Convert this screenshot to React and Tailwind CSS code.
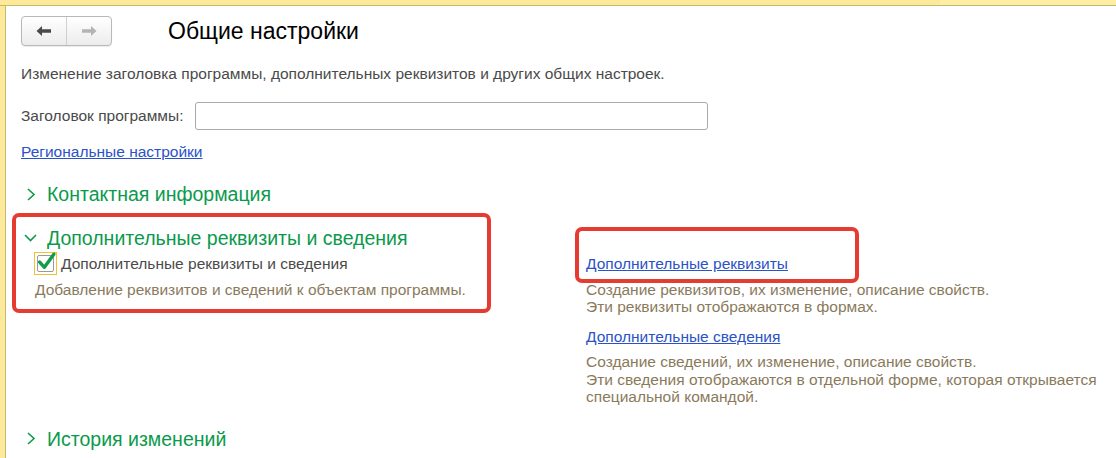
import React from "react";

const font = { fontFamily: '"Liberation Sans", Arial, sans-serif' };

function Chevron({ open }) {
  if (open) {
    return (
      <svg className="shrink-0" width="13" height="8" viewBox="0 0 13 8" fill="none" stroke="#0f9a4a" strokeWidth="1.6">
        <path d="M1 1 L6.5 6.5 L12 1" />
      </svg>
    );
  }
  return (
    <svg className="shrink-0" width="9" height="13" viewBox="0 0 9 13" fill="none" stroke="#0f9a4a" strokeWidth="1.6">
      <path d="M1 1 L7 6.5 L1 12" />
    </svg>
  );
}

function GroupTitle({ open, children, className = "" }) {
  return (
    <div className={`flex items-center text-[19.5px] leading-[24px] text-[#0a9a4c] ${open ? "gap-[10px]" : "gap-[11px]"} ${className}`}>
      <Chevron open={open} />
      <span>{children}</span>
    </div>
  );
}

export default function App() {
  return (
    <div className="relative w-[1116px] h-[458px] bg-white overflow-hidden text-[#4a4a4a]" style={font}>
      <div className="flex h-[6px] border-b border-[#c8b86c]">
        <div className="w-[940px] bg-[#fce99a]" />
        <div className="flex-1 bg-[#fdeea6]" />
      </div>
      <div className="flex h-[452px]">
        <div className="w-[6px] bg-[#fce99a] border-r border-[#c8b86c]" />
        <div className="flex-1 pl-[15px] text-[15.5px] leading-[18px]">
          {/* header */}
          <div className="flex items-center mt-[10px] h-[30px]">
            <div className="flex w-[91px] h-[30px] rounded-[4px] border border-[#b8b8b8] bg-gradient-to-b from-white to-[#ececec] shadow-[0_1px_1px_rgba(0,0,0,0.08)]">
              <button className="flex-1 flex items-center justify-center border-r border-[#cfcfcf]">
                <svg width="16" height="12" viewBox="0 0 16 12">
                  <path d="M0.5 6 L6 1 V4.3 H15 V7.7 H6 V11 Z" fill="#4a4a4a" />
                </svg>
              </button>
              <button className="flex-1 flex items-center justify-center">
                <svg width="16" height="12" viewBox="0 0 16 12">
                  <path d="M15.5 6 L10 1 V4.3 H1 V7.7 H10 V11 Z" fill="#b4b4b4" />
                </svg>
              </button>
            </div>
            <h1 className="ml-[56px] text-[23px] leading-[28px] text-black">Общие настройки</h1>
          </div>

          <p className="mt-[19px]">
            Изменение заголовка программы, дополнительных реквизитов и других общих настроек.
          </p>

          <div className="flex items-center mt-[19px]">
            <span>Заголовок программы:</span>
            <div className="ml-[12px] w-[513px] h-[28px] border border-[#a9a9a9] rounded-[3px] bg-white" />
          </div>

          <a className="block mt-[13px] text-[#2b52c8] underline">Региональные настройки</a>

          <GroupTitle className="mt-[21px] ml-[6px]">Контактная информация</GroupTitle>

          <div className="flex mt-[20px]">
            <div className="w-[565px]">
              <GroupTitle open className="ml-[3px]">Дополнительные реквизиты и сведения</GroupTitle>
              <div className="flex items-center mt-[2px] ml-[13px]">
                <div className="w-[23px] h-[23px] border border-[#f2c130] flex items-center justify-center relative">
                  <div className="w-[17px] h-[17px] border border-[#9a9a9a] rounded-[2px] bg-white" />
                  <svg className="absolute left-[1px] top-[-2px]" width="21" height="21" viewBox="0 0 20 20">
                    <path d="M3.5 10.5 L8 15.5 L17 3" fill="none" stroke="#119c48" strokeWidth="3.2" strokeLinecap="round" strokeLinejoin="round" />
                  </svg>
                </div>
                <span className="ml-[4px]">Дополнительные реквизиты и сведения</span>
              </div>
              <p className="mt-[6px] ml-[14px] text-[#8a7a5c]">
                Добавление реквизитов и сведений к объектам программы.
              </p>
            </div>
            <div className="pt-[29px]">
              <a className="block text-[#2b52c8] underline">Дополнительные реквизиты</a>
              <p className="mt-[8px] leading-[17px] text-[#8a7a5c]">
                Создание реквизитов, их изменение, описание свойств.
                <br />
                Эти реквизиты отображаются в формах.
              </p>
              <a className="block mt-[13px] text-[#2b52c8] underline">Дополнительные сведения</a>
              <p className="mt-[7px] leading-[17.5px] text-[#8a7a5c]">
                Создание сведений, их изменение, описание свойств.
                <br />
                Эти сведения отображаются в отдельной форме, которая открывается
                <br />
                специальной командой.
              </p>
            </div>
          </div>

          <GroupTitle className="mt-[21px] ml-[6px]">История изменений</GroupTitle>
        </div>
      </div>

      {/* annotation frames */}
      <div className="absolute left-[12px] top-[213px] w-[479px] h-[100px] border-[4px] border-[#e53b31] rounded-[7px]" />
      <div className="absolute left-[575px] top-[227px] w-[284px] h-[56px] border-[4px] border-[#e53b31] rounded-[7px]" />
    </div>
  );
}
